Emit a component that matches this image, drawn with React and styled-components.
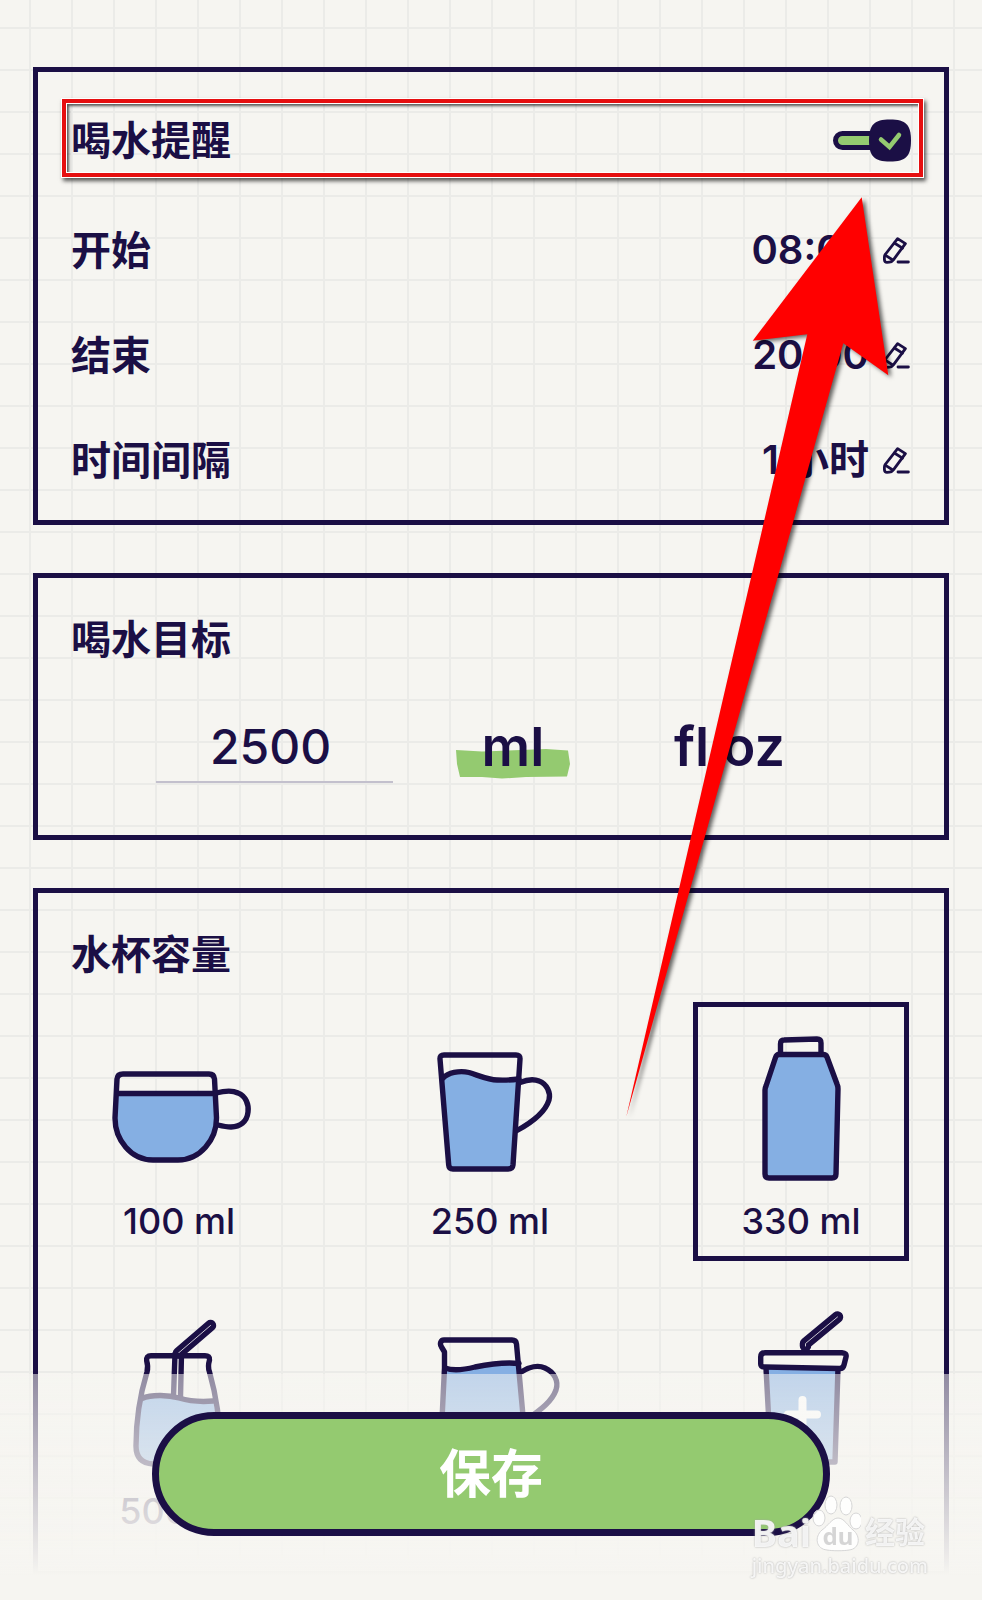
import React, { useState } from 'react';
import styled, { createGlobalStyle } from 'styled-components';

const GlobalStyle = createGlobalStyle`
  :root {
    --ink: #1b0f45;
    --paper: #f6f5f1;
    --line: #ebebe8;
    --green: #94ca70;
    --water: #85afe3;
  }
  * {
    box-sizing: border-box;
  }
  body {
    margin: 0;
    background: var(--paper);
    color: var(--ink);
    font-family: Inter, 'Noto Sans CJK SC', sans-serif;
    font-weight: 500;
  }
  button,
  input {
    margin: 0;
    padding: 0;
    border: 0;
    background: none;
    color: inherit;
    font: inherit;
  }
  button {
    cursor: pointer;
  }
`;

const times = [
  { id: 'start', label: '开始', value: '08:00' },
  { id: 'end', label: '结束', value: '20:00' },
  { id: 'interval', label: '时间间隔', value: '1 小时' },
];

const EditIcon = () => (
  <Pencil viewBox="0 0 28 28" aria-hidden="true">
    <path d="M14.6 1.6 22.4 6.6 10.4 22.8Q9 25 6.4 25.2L4 25.4Q1.6 25.4 1.4 22.6L1.4 20Q1.4 18.4 2.6 17Z" />
    <path d="M11.4 6 19.4 11.2M2.6 18.4 9.8 23M15 25H25.4" />
  </Pencil>
);

const Straw = ({ d }) => (
  <>
    <path d={d} strokeWidth="11.5" />
    <path d={d} stroke="#c9c6d0" strokeWidth="1" />
  </>
);

const Mug = () => (
  <>
    <Water d="M23 76H122L123 100C123 122 106 142 84 142H60C38 142 21 122 21 100Z" />
    <path d="M29 56H115Q120 56 120.5 61L122.500 100C122.500 122 106 142 84 142H59C37 142 21 122 21 100L23 61Q23.500 56 29 56ZM23 75.500H122" />
    <path d="M122 75C130 73 138 72 144 75C152 78 155 87 154 94C153 104 146 108.500 137 109C132 109 128 108 124 107" />
  </>
);

const TallMug = () => (
  <>
    <Water d="M37 61C42 55 54 52 64 55C75 59 84 62 92 62H114L108 151H44Z" />
    <path d="M39 37H111Q115.300 37 115 41L108 147Q107.600 151 103 151H48Q44 151 43.700 147L35 41Q34.700 37 39 37Z" />
    <path d="M38 60C43 55 54 52 64 54.500C75 58 84 62 92 62Q103 62.500 114 61" />
    <path d="M115 64.500C121 62 128 60.500 134 63C142 66 146 75 144 82C140 95 124 106 112 112.500" />
  </>
);

const Bottle = () => (
  <>
    <Water d="M61 37H109L122 69L120 160H49V70Z" />
    <path d="M64.500 36V26Q64.500 22 68 22L101 21Q105 21 105 25V36" />
    <path d="M62 36.500H107Q110 36.500 111 39L121 66Q122 68 122 71L120 156Q120 160 116 160H53Q49 160 49 156V72Q49 70 50 68L59.500 39.500Q60.500 36.500 63 36.500" />
  </>
);

const Glass = () => (
  <>
    <Water d="M48 91C58 86 75 87 85 90C95 93 108 94 119 93C124 110 127 135 125 142Q124 155 110 156H58Q42 155 42 140C42 120 45 106 48 91Z" />
    <path d="M81 46 79.500 88M87.500 46 86.500 89" />
    <Straw d="M84.500 45 116.500 17.500" />
    <path d="M57 47.700H111Q116 47.700 115.500 52C114 57 114 60 115.500 64C122 87 126 115 126 138Q126 155 109 156H59Q42 155 42 138C42 115 46 87 53 64C54 60 54 57 52.700 53Q52 47.700 57 47.700Z" />
    <path d="M48 90.500C58 86 75 87 85 90C95 93 108 94 119 93" />
  </>
);

const Jug = () => (
  <>
    <Water d="M39 60C48 63 58 62 70 59C85 56 100 54 114 55L122 156H35Z" />
    <path d="M39 32H107Q111 32 111.500 36L122 152Q122 156 118 156H39Q35 156 35 152L39.500 60V44L36.500 39C34.500 36 35.500 32 39 32Z" />
    <path d="M40 60C48 63 58 62 70 59C85 56 100 54 114 55.500" />
    <path d="M117 63.500C124 59 133 57 140 60C149 64 154 73 151 82C147 93 137 101 121 112" />
  </>
);

const PlasticCup = () => (
  <>
    <Water d="M50 60H122L119 154H55Z" />
    <path d="M50 60 55 154H119L122 60" />
    <path d="M49 44.700H126Q131 45 130 49L128 57Q127 61 123 60.500L49 59Q44.700 59 44.700 56V49Q44.700 44.700 49 44.700Z" fill="#f6f5f1" />
    <Straw d="M89.500 38V35.500L121.500 9" />
    <path d="M86.500 92V121M72 106.500H101" stroke="#ffffff" strokeWidth="8" />
  </>
);

const cups = [
  { id: 'mug', label: '100 ml', Art: Mug },
  { id: 'tall-mug', label: '250 ml', Art: TallMug },
  { id: 'bottle', label: '330 ml', Art: Bottle },
  { id: 'glass', label: '500 ml', Art: Glass },
  { id: 'jug', Art: Jug },
  { id: 'custom', Art: PlasticCup },
];

const Toggle = ({ id, checked, onChange }) => (
  <ToggleWrapper>
    <input id={id} type="checkbox" role="switch" checked={checked} onChange={onChange} />
    <svg viewBox="0 0 78 43" aria-hidden="true">
      <rect x="2.500" y="14.500" width="60" height="14" rx="7" fill="#94ca70" stroke="#1b0f45" strokeWidth="5" />
      <path d="M57 0.500C73 0.500 78 6 78 21.500C78 37 73 42.500 57 42.500C41 42.500 36 37 36 21.500C36 6 41 0.500 57 0.500Z" fill="#1b0f45" />
      <path d="M48 20.500 56.500 28 66 16" fill="none" stroke="#94ca70" strokeWidth="4.500" strokeLinecap="round" />
    </svg>
  </ToggleWrapper>
);

const App = () => {
  const [remind, setRemind] = useState(true);
  const [goal, setGoal] = useState('2500');
  const [unit, setUnit] = useState('ml');
  const [cup, setCup] = useState('bottle');

  return (
    <Page>
      <GlobalStyle />
      <Card>
        <Rows>
          <Row $marked>
            <Label htmlFor="remind">喝水提醒</Label>
            <Toggle id="remind" checked={remind} onChange={() => setRemind(!remind)} />
          </Row>
          {times.map(({ id, label, value }) => (
            <Row key={id}>
              <Label as="span" id={id}>
                {label}
              </Label>
              <EditButton type="button" aria-describedby={id}>
                <span>{value}</span>
                <EditIcon />
              </EditButton>
            </Row>
          ))}
        </Rows>
      </Card>

      <Card>
        <Title as="label" htmlFor="goal">
          喝水目标
        </Title>
        <Goal>
          <GoalInput
            id="goal"
            inputMode="numeric"
            value={goal}
            onChange={e => setGoal(e.target.value)}
          />
          {['ml', 'fl oz'].map(name => (
            <Unit
              key={name}
              type="button"
              aria-pressed={unit === name}
              onClick={() => setUnit(name)}
            >
              {unit === name && (
                <Marker viewBox="0 0 114 30" preserveAspectRatio="none" aria-hidden="true">
                  <path d="M0 1 26 2.500 90 0 112 1.500 114 15 111 27.500 70 28 46 29.500 26 28H4L1 15Z" />
                </Marker>
              )}
              <span>{name}</span>
            </Unit>
          ))}
        </Goal>
      </Card>

      <Card>
        <Title>水杯容量</Title>
        <Cups>
          {cups.map(({ id, label, Art }) => (
            <Cup
              key={id}
              type="button"
              $active={cup === id}
              aria-label={label || id}
              aria-pressed={cup === id}
              onClick={() => setCup(id)}
            >
              <Drawing viewBox="0 0 170 170" aria-hidden="true">
                <Art />
              </Drawing>
              {label}
            </Cup>
          ))}
        </Cups>
      </Card>

      <Arrow viewBox="620 190 280 940" aria-hidden="true">
        <path d="M861.700 197.300 888.300 375.300 843.300 343.300 626.300 1116.700 807.300 334.300 752.700 340.700Z" />
      </Arrow>

      <Footer>
        <SaveButton type="button">保存</SaveButton>
        <Watermark>
          <Brand>
            <span>Bai</span>
            <Paw viewBox="0 0 50 58" aria-hidden="true">
              <ellipse cx="8" cy="24" rx="6" ry="8" />
              <ellipse cx="20" cy="11" rx="6" ry="9" />
              <ellipse cx="35" cy="12" rx="6" ry="9" />
              <ellipse cx="45" cy="27" rx="6" ry="8" />
              <path d="M27 24C33 24 37 32 42 36C50 42 49 55 38 56C33 57 21 57 16 56C5 55 3 43 11 36C17 32 21 24 27 24Z" />
              <text x="27" y="51">du</text>
            </Paw>
            <span>经验</span>
          </Brand>
          jingyan.baidu.com
        </Watermark>
      </Footer>
    </Page>
  );
};

const Page = styled.main`
  position: relative;
  display: flex;
  flex-direction: column;
  gap: 48px;
  min-height: 100vh;
  padding: 67px 33px 24px;
  background-color: var(--paper);
  background-image: linear-gradient(var(--line) 2px, transparent 2px),
    linear-gradient(90deg, var(--line) 2px, transparent 2px);
  background-size: 42px 42px;
  background-position: 29px 27px;
`;

const Card = styled.section`
  padding: 0 33px;
  border: 5px solid var(--ink);
`;

const Rows = styled.div`
  padding: 16px 0 7px;
`;

const Row = styled.div`
  position: relative;
  display: flex;
  align-items: center;
  justify-content: space-between;
  height: 105px;
  margin-bottom: ${props => (props.$marked ? '5px' : '0')};
  &::after {
    content: '';
    display: ${props => (props.$marked ? 'block' : 'none')};
    position: absolute;
    inset: 11px -12px 16px -9px;
    border: 4px solid #e60f10;
    outline: 1px solid #ffffff;
    box-shadow: 2px 3px 4px 1px rgba(0, 0, 0, 0.65), inset 0 0 0 1px #ffffff,
      inset 3px 3px 3px rgba(0, 0, 0, 0.65);
    pointer-events: none;
  }
`;

const Label = styled.label`
  padding-bottom: 6px;
  font-size: 40px;
  font-weight: 700;
`;

const ToggleWrapper = styled.span`
  display: grid;
  width: 78px;
  height: 43px;
  > * {
    grid-area: 1 / 1;
    width: 100%;
    height: 100%;
  }
  input {
    opacity: 0;
  }
  svg {
    pointer-events: none;
  }
`;

const EditButton = styled.button`
  display: flex;
  align-items: center;
  gap: 14px;
  font-size: 40px;
  font-weight: 600;
  line-height: 60px;
  span {
    padding-bottom: 2px;
  }
`;

const Pencil = styled.svg`
  width: 28px;
  height: 28px;
  fill: none;
  stroke: var(--ink);
  stroke-width: 2.8;
  stroke-linecap: round;
  stroke-linejoin: round;
`;

const Title = styled.h2`
  display: block;
  margin: 32px 0 0;
  font-size: 40px;
  font-weight: 700;
  line-height: 60px;
`;

const Goal = styled.div`
  display: grid;
  grid-template-columns: 237fr 114fr 193fr;
  gap: 63px;
  padding: 41px 85px 52px;
`;

const GoalInput = styled.input`
  width: 100%;
  height: 72px;
  padding-right: 8px;
  border-bottom: 2px solid #c3c0cd;
  border-radius: 0;
  font-size: 48px;
  text-align: center;
`;

const Unit = styled.button`
  display: grid;
  align-items: center;
  justify-items: center;
  height: 72px;
  font-size: 54px;
  line-height: 72px;
  font-weight: 600;
  > * {
    grid-area: 1 / 1;
  }
`;

const Marker = styled.svg`
  align-self: end;
  width: 100%;
  height: 30px;
  margin-bottom: 4px;
  fill: var(--green);
`;

const Cups = styled.div`
  display: grid;
  grid-template-columns: repeat(3, 1fr);
  gap: 31px 95px;
  padding: 17px 2px 20px 0;
`;

const Cup = styled.button`
  display: flex;
  flex-direction: column;
  align-items: center;
  gap: 10px;
  height: 259px;
  padding-top: 11px;
  border: 5px solid ${props => (props.$active ? 'var(--ink)' : 'transparent')};
  font-size: 36px;
  line-height: 46px;
`;

const Drawing = styled.svg`
  width: 170px;
  height: 170px;
  fill: none;
  stroke: var(--ink);
  stroke-width: 5.4;
  stroke-linecap: round;
  stroke-linejoin: round;
`;

const Water = styled.path`
  fill: var(--water);
  stroke: none;
`;

const Arrow = styled.svg`
  position: absolute;
  top: 190px;
  right: 82px;
  width: 280px;
  height: 940px;
  fill: #ff0000;
  filter: drop-shadow(3px 2px 2px rgba(0, 0, 0, 0.6));
  pointer-events: none;
`;

const Footer = styled.footer`
  position: fixed;
  right: 0;
  bottom: 0;
  left: 0;
  display: flex;
  justify-content: center;
  padding: 38px 152px 64px;
  background: linear-gradient(rgba(246, 245, 241, 0.54), var(--paper) 89%);
`;

const SaveButton = styled.button`
  flex: 1;
  height: 124px;
  padding-bottom: 8px;
  border: 7px solid var(--ink);
  border-radius: 62px;
  background: var(--green);
  color: #ffffff;
  font-size: 52px;
  font-weight: 700;
`;

const Watermark = styled.div`
  position: absolute;
  right: 54px;
  bottom: 20px;
  color: rgba(255, 255, 255, 0.85);
  font-family: 'Noto Sans', 'Noto Sans CJK SC', sans-serif;
  font-size: 20px;
  line-height: 28px;
  text-shadow: 0 0 2px #a5a5a5;
  pointer-events: none;
`;

const Brand = styled.div`
  display: flex;
  align-items: flex-end;
  height: 58px;
  font-size: 38px;
  font-weight: 700;
  line-height: 40px;
  span:last-child {
    margin-left: 4px;
    font-size: 30px;
  }
`;

const Paw = styled.svg`
  width: 50px;
  height: 58px;
  fill: rgba(255, 255, 255, 0.85);
  stroke: #d5d5d5;
  text {
    fill: #d5d5d5;
    stroke: none;
    font-size: 24px;
    text-anchor: middle;
    text-shadow: none;
  }
`;

export default App;
